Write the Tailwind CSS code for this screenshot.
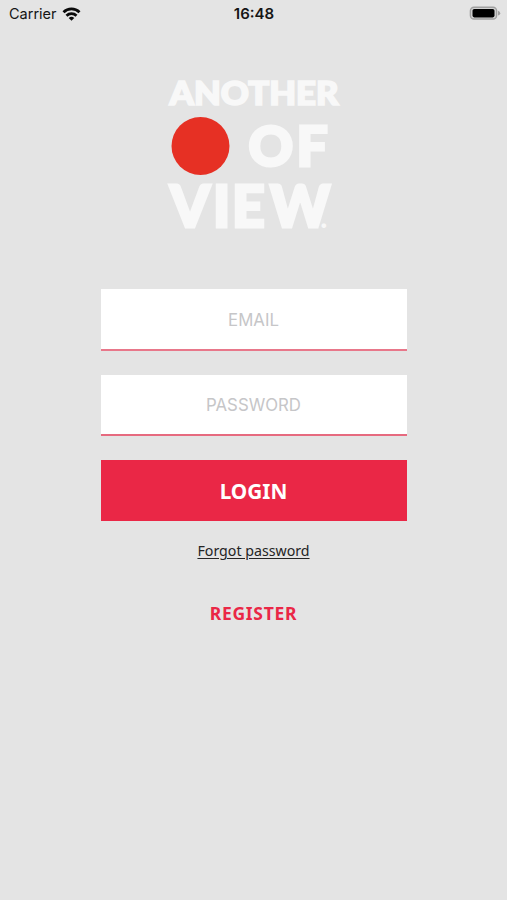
<!DOCTYPE html>
<html lang="en">
<head>
<meta charset="utf-8">
<title>Login</title>
<script src="https://cdn.jsdelivr.net/npm/@tailwindcss/browser@4"></script>
</head>
<body class="bg-[#e4e4e4]">
<div class="flex h-[900px] w-[507px] flex-col items-center overflow-hidden bg-[#e4e4e4] font-['Inter',sans-serif]">
  <header class="grid h-[27px] w-full grid-cols-3 items-center pr-[6px] pl-[9px] text-[#151515]">
    <div class="flex items-center gap-[5px]">
      <span class="pt-[2px] text-[14.5px] leading-none">Carrier</span>
      <svg class="h-[14px] w-[19px]" viewBox="0 0 18 14" fill="none" stroke="#0a0a0a" stroke-width="2.8">
        <path d="M1 5.2a11.4 11.4 0 0 1 16 0"/>
        <path d="M4 8.7a7.2 7.2 0 0 1 10 0"/>
        <path d="M9 13.8 6.2 11a4 4 0 0 1 5.6 0Z" fill="#0a0a0a" stroke="none"/>
      </svg>
    </div>
    <span class="pr-[2px] text-center text-[15px] leading-none font-semibold">16:48</span>
    <svg class="h-[15px] w-[32px] justify-self-end" viewBox="0 0 32 15">
      <rect x="1.4" y="1.2" width="26.2" height="11.8" rx="3.6" fill="#d2d2d2" stroke="#a0a0a0" stroke-width="1.4"/>
      <rect x="3.5" y="3" width="22" height="8.4" rx="1.8" fill="#000"/>
      <path d="M29 4.8q2.2.6 2.2 2.4T29 9.6Z" fill="#a0a0a0"/>
    </svg>
  </header>
  <main class="flex w-[306px] flex-col items-center pt-[48px]">
    <svg class="h-[160px] w-[190px] overflow-visible" viewBox="159 75 190 160" fill="#f8f8f8" stroke="#f8f8f8" font-family="Lato, sans-serif" font-weight="900">
      <text x="169.5" y="105.4" font-size="31.5" stroke-width="1.7" textLength="169" lengthAdjust="spacingAndGlyphs">ANOTHER</text>
      <circle cx="200.5" cy="146" r="29" fill="#e63024" stroke="none"/>
      <text x="248.5 296.5" y="165.6" font-size="55" stroke-width="3">OF</text>
      <text x="170 213 232 270 320.5" y="226.6" font-size="57" stroke-width="3">VIEW<tspan font-size="28" dy="1" stroke-width="0">.</tspan></text>
    </svg>
    <div class="mt-[54px] flex h-[62px] w-full items-center justify-center border-b-2 border-[#e8778a] bg-white pt-[2px]">
      <span class="text-[16.8px] leading-none text-[#c6c6c8]">EMAIL</span>
    </div>
    <div class="mt-6 flex h-[61px] w-full items-center justify-center border-b-2 border-[#e66a7f] bg-white pt-[2px]">
      <span class="text-[16.8px] leading-none text-[#c6c6c8]">PASSWORD</span>
    </div>
    <button class="mt-6 flex h-[61px] w-full items-center justify-center bg-[#ea2746] pt-[2px] font-['Noto_Sans',sans-serif] text-[20.8px] font-bold text-white">LOGIN</button>
    <a class="mt-[20px] font-['Noto_Sans',sans-serif] text-[14.2px] leading-5 text-[#252525] underline underline-offset-2">Forgot password</a>
    <a class="mt-[40px] font-['Noto_Sans',sans-serif] text-[17.5px] leading-6 font-bold tracking-[0.7px] text-[#ea2746]">REGISTER</a>
  </main>
</div>
</body>
</html>
